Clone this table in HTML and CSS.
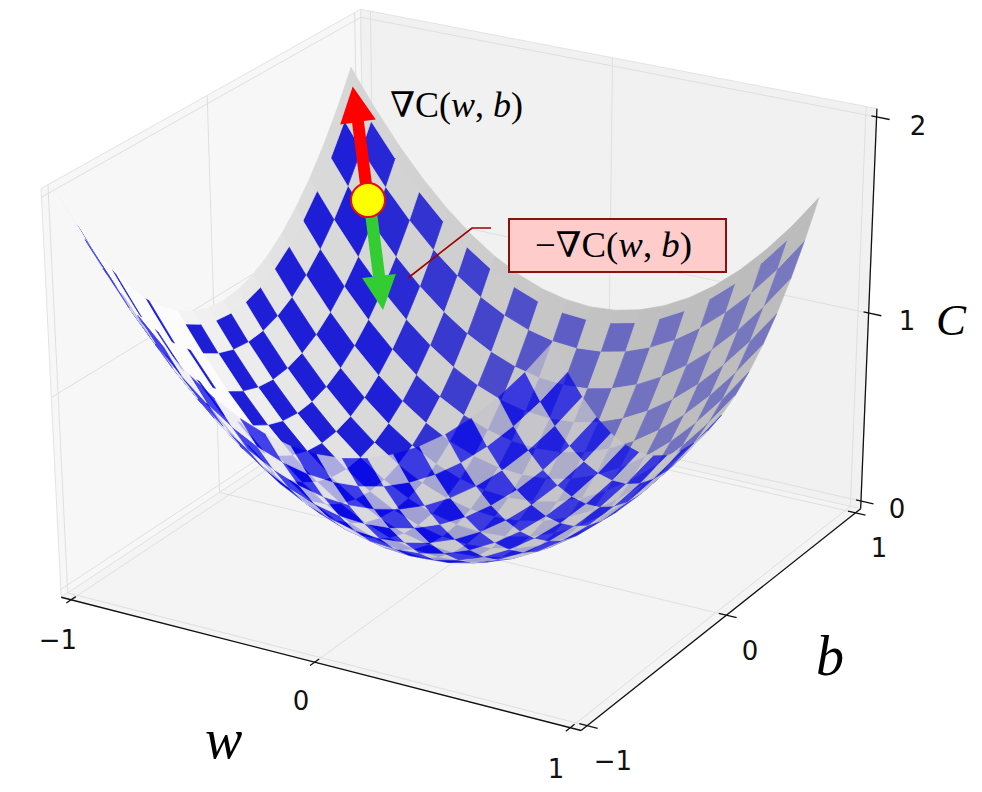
FILE: index.html
```html
<!DOCTYPE html>
<html lang="en">
<head>
<meta charset="utf-8">
<title>Gradient descent valley</title>
<link rel="stylesheet" href="styles.css">
</head>
<body>
<div class="figure">
  <svg id="chart" class="chart" width="982" height="792" viewBox="0 0 982 792" xmlns="http://www.w3.org/2000/svg">
    <g id="box"></g>
    <g id="surface-back"></g>
    <g id="surface-front" class="surface-front"></g>

    <g class="ticklabels">
      <text class="ticklabel" x="58" y="649">−1</text>
      <text class="ticklabel" x="301" y="710">0</text>
      <text class="ticklabel" x="556" y="778">1</text>
      <text class="ticklabel" x="613" y="770">−1</text>
      <text class="ticklabel" x="750" y="660">0</text>
      <text class="ticklabel" x="879" y="557">1</text>
      <text class="ticklabel" x="897" y="518">0</text>
      <text class="ticklabel" x="907" y="330">1</text>
      <text class="ticklabel" x="918" y="135">2</text>
    </g>

    <text class="axlabel" x="205" y="758">w</text>
    <text class="axlabel" x="816" y="675">b</text>
    <text class="axlabel axlabel-c" x="936" y="335">C</text>

    <polygon class="arrow-up" points="362.1,200.9 352.1,122.9 340.2,124.6 352.7,86.4 375.8,119.4 363.9,121.1 373.9,199.1"/>
    <polygon class="arrow-down" points="364,205.7 373,276.7 362.1,278 383,310 395.9,274 385,275.3 376,204.3"/>
    <circle class="ball" cx="368" cy="200" r="17"/>

    <text class="grad" x="390" y="117" textLength="133" lengthAdjust="spacingAndGlyphs">∇C(<tspan class="it">w</tspan>, <tspan class="it">b</tspan>)</text>

    <polyline class="leader" points="408,278 472,228 491,228"/>
    <rect class="callout" x="509" y="219" width="217" height="53"/>
    <text class="grad" x="535" y="257" textLength="157" lengthAdjust="spacingAndGlyphs">−<tspan class="it">∇</tspan>C(<tspan class="it">w</tspan>, <tspan class="it">b</tspan>)</text>
  </svg>
</div>
<script src="script.js"></script>
</body>
</html>
```

FILE: styles.css
```css
html, body {
  margin: 0;
  padding: 0;
  background: #ffffff;
}

.figure {
  width: 982px;
  height: 792px;
  overflow: hidden;
}

.chart {
  display: block;
}

.pane {
  stroke: #e3e3e3;
  stroke-width: 1;
}

.pane-left { fill: #f7f7f7; }
.pane-back { fill: #f1f1f1; }
.pane-floor { fill: #f4f4f4; }

.grid {
  fill: none;
  stroke: #dfdfdf;
  stroke-width: 1;
}

.axis {
  fill: none;
  stroke: #111111;
  stroke-width: 1.3;
}

.tickmark {
  fill: none;
  stroke: #111111;
  stroke-width: 1.3;
}

.face {
  stroke-width: 0.7;
  stroke-linejoin: round;
}

.surface-front {
  opacity: 0.74;
}

.ticklabel {
  font-family: "DejaVu Sans", "Liberation Sans", sans-serif;
  font-size: 26px;
  fill: #111111;
  text-anchor: middle;
}

.axlabel {
  font-family: "Liberation Serif", "DejaVu Serif", serif;
  font-style: italic;
  font-size: 56px;
  fill: #000000;
}

.axlabel-c {
  font-size: 45px;
}

.arrow-up { fill: #ff0000; }
.arrow-down { fill: #33cc33; }

.ball {
  fill: #ffff00;
  stroke: #e01010;
  stroke-width: 2;
}

.grad {
  font-family: "Liberation Serif", "DejaVu Serif", serif;
  font-size: 35px;
  fill: #000000;
}

.it {
  font-style: italic;
}

.leader {
  fill: none;
  stroke: #a00000;
  stroke-width: 1.6;
}

.callout {
  fill: #ffcccc;
  stroke: #8b1010;
  stroke-width: 2;
}
```

FILE: script.js
```js
(function () {
  var NS = 'http://www.w3.org/2000/svg';
  var P = 1 + 2 / 48, Z0 = -2 / 48, Z2 = 2 + 2 / 48;

  // measured screen positions of known 3D points (ticks and pane corners)
  var corr = [
    [[-1, -P, Z0], [70, 600]],
    [[0, -P, Z0], [313, 663]],
    [[1, -P, Z0], [570, 728]],
    [[P, -1, Z0], [587, 725]],
    [[P, 0, Z0], [727, 615]],
    [[P, 1, Z0], [857, 512]],
    [[P, P, 0], [860, 502]],
    [[P, P, 1], [867, 313]],
    [[P, P, 2], [877, 117]],
    [[-P, -P, Z2], [42, 188]],
    [[-P, P, Z2], [357, 9]],
    [[-P, 0, Z2], [208, 96]],
    [[0, P, Z2], [615, 58]],
    [[-P, 0, Z0], [222, 492]]
  ];

  var n = 11, M = [], r = [], i, j, k;
  for (i = 0; i < n; i++) { M.push(new Array(n).fill(0)); r.push(0); }
  function addRow(a, b) {
    for (var i = 0; i < n; i++) {
      r[i] += a[i] * b;
      for (var j = 0; j < n; j++) M[i][j] += a[i] * a[j];
    }
  }
  corr.forEach(function (c) {
    var X = c[0][0], Y = c[0][1], Z = c[0][2], u = c[1][0], v = c[1][1];
    addRow([X, Y, Z, 1, 0, 0, 0, 0, -u * X, -u * Y, -u * Z], u);
    addRow([0, 0, 0, 0, X, Y, Z, 1, -v * X, -v * Y, -v * Z], v);
  });
  for (var c = 0; c < n; c++) {
    var piv = c;
    for (k = c + 1; k < n; k++) if (Math.abs(M[k][c]) > Math.abs(M[piv][c])) piv = k;
    var t1 = M[c]; M[c] = M[piv]; M[piv] = t1;
    var t2 = r[c]; r[c] = r[piv]; r[piv] = t2;
    for (k = 0; k < n; k++) {
      if (k === c) continue;
      var f = M[k][c] / M[c][c];
      for (j = c; j < n; j++) M[k][j] -= f * M[c][j];
      r[k] -= f * r[c];
    }
  }
  var p = r.map(function (x, i) { return x / M[i][i]; });

  function proj(X, Y, Z) {
    var d = p[8] * X + p[9] * Y + p[10] * Z + 1;
    return [(p[0] * X + p[1] * Y + p[2] * Z + p[3]) / d, (p[4] * X + p[5] * Y + p[6] * Z + p[7]) / d];
  }
  function pts(list) {
    return list.map(function (q) {
      var s = proj(q[0], q[1], q[2]);
      return s[0].toFixed(2) + ',' + s[1].toFixed(2);
    }).join(' ');
  }
  function el(tag, attrs, parent) {
    var e = document.createElementNS(NS, tag);
    for (var a in attrs) e.setAttribute(a, attrs[a]);
    parent.appendChild(e);
    return e;
  }
  function poly(list, cls, parent) { return el('polygon', { points: pts(list), 'class': cls }, parent); }
  function line(list, cls, parent) { return el('polyline', { points: pts(list), 'class': cls }, parent); }

  // ---- axes box ----
  var box = document.getElementById('box');
  poly([[-P, -P, Z0], [-P, P, Z0], [-P, P, Z2], [-P, -P, Z2]], 'pane pane-left', box);
  poly([[-P, P, Z0], [P, P, Z0], [P, P, Z2], [-P, P, Z2]], 'pane pane-back', box);
  poly([[-P, -P, Z0], [P, -P, Z0], [P, P, Z0], [-P, P, Z0]], 'pane pane-floor', box);
  [-1, 0, 1].forEach(function (w) { line([[w, -P, Z0], [w, P, Z0], [w, P, Z2]], 'grid', box); });
  [-1, 0, 1].forEach(function (b) { line([[P, b, Z0], [-P, b, Z0], [-P, b, Z2]], 'grid', box); });
  [0, 1, 2].forEach(function (z) { line([[-P, -P, z], [-P, P, z], [P, P, z]], 'grid', box); });
  line([[-P, -P, Z0], [P, -P, Z0]], 'axis', box);
  line([[P, -P, Z0], [P, P, Z0]], 'axis', box);
  line([[P, P, Z0], [P, P, Z2]], 'axis', box);
  [-1, 0, 1].forEach(function (w) { line([[w, -P + 0.03, Z0], [w, -P - 0.03, Z0]], 'tickmark', box); });
  [-1, 0, 1].forEach(function (b) { line([[P - 0.03, b, Z0], [P + 0.04, b, Z0]], 'tickmark', box); });
  [0, 1, 2].forEach(function (z) { line([[P - 0.02, P, z], [P + 0.05, P, z]], 'tickmark', box); });

  // ---- surface C = w^2 + b^2 ----
  var N = 20, xs = [];
  for (i = 0; i < N; i++) xs.push(-1 + 0.1 * i);
  var cam = [0.433, -0.75, 0.5], L = [-1, -1, 0.5];
  var BAND = 0.03;
  var faces = [], smin = Infinity, smax = -Infinity;

  function addFace(w0, w1, b0, b1, blue, band, zone, bias) {
    var verts = [[w0, b0], [w1, b0], [w1, b1], [w0, b1]].map(function (q) {
      return [q[0], q[1], q[0] * q[0] + q[1] * q[1]];
    });
    var wc = (w0 + w1) / 2, bc = (b0 + b1) / 2;
    var nx = -2 * wc, ny = -2 * bc, nz = 1;
    var len = Math.sqrt(nx * nx + ny * ny + nz * nz);
    var facing = (nx * cam[0] + ny * cam[1] + nz * cam[2]) > 0;
    var s = (-nx * L[0] - ny * L[1] - nz * L[2]) / len;
    var depth = bias || 0;
    verts.forEach(function (v) { depth -= v[0] * cam[0] + v[1] * cam[1] + v[2] * cam[2]; });
    smin = Math.min(smin, s); smax = Math.max(smax, s);
    faces.push({ verts: verts, facing: facing, s: s, depth: depth, blue: blue, band: band, zone: zone });
  }

  for (var rs = 0; rs < N - 1; rs++) {
    for (var cs = 0; cs < N - 1; cs++) {
      var w0 = xs[cs], w1 = xs[cs + 1], b0 = xs[rs], b1 = xs[rs + 1];
      var blue = (rs + cs) % 2 === 1;
      var zone = ((w0 + w1) / 2 < -0.45 && (b0 + b1) / 2 < -0.25);
      var wr = cs === 0 ? [[w0, w0 + BAND, true], [w0 + BAND, w1, false]] : [[w0, w1, false]];
      var br = rs === N - 2 ? [[b0, b1 - BAND, false], [b1 - BAND, b1, true]] : [[b0, b1, false]];
      wr.forEach(function (a) {
        br.forEach(function (b) {
          addFace(a[0], a[1], b[0], b[1], blue, a[2] || b[2], zone);
        });
      });
      if (zone && blue) addFace(w0, w1, b0, b0 + 0.022, true, false, false, -0.004);
    }
  }
  faces.sort(function (a, b) { return b.depth - a.depth; });
  var back = document.getElementById('surface-back');
  var front = document.getElementById('surface-front');
  function rgb(rr, gg, bb) { return 'rgb(' + Math.round(rr) + ',' + Math.round(gg) + ',' + Math.round(bb) + ')'; }
  faces.forEach(function (fc) {
    var t = (fc.s - smin) / (smax - smin);
    var col, g;
    if (fc.facing) {
      var u = Math.max(0, Math.min(1, t / 0.55));
      if (fc.zone) {
        g = 247 + 5 * t;
        col = rgb(g, g, g);
      } else if (fc.blue && !fc.band) {
        col = rgb(120 - 90 * u, 120 - 90 * u, 190 + 25 * u);
      } else {
        g = t < 0.6 ? 188 + 50 * t : 218 + (t - 0.6) * 85;
        col = rgb(g, g, g);
      }
      el('polygon', { points: pts(fc.verts), 'class': 'face', fill: col, stroke: col }, back);
    } else {
      if (fc.blue) col = rgb(20 * (1 - t), 20 * (1 - t), 232);
      else {
        g = 198 + 45 * Math.max(0, t - 0.6) / 0.4;
        col = rgb(g, g, g + 6);
      }
      el('polygon', { points: pts(fc.verts), 'class': 'face', fill: col, stroke: col }, front);
    }
  });
})();
```
